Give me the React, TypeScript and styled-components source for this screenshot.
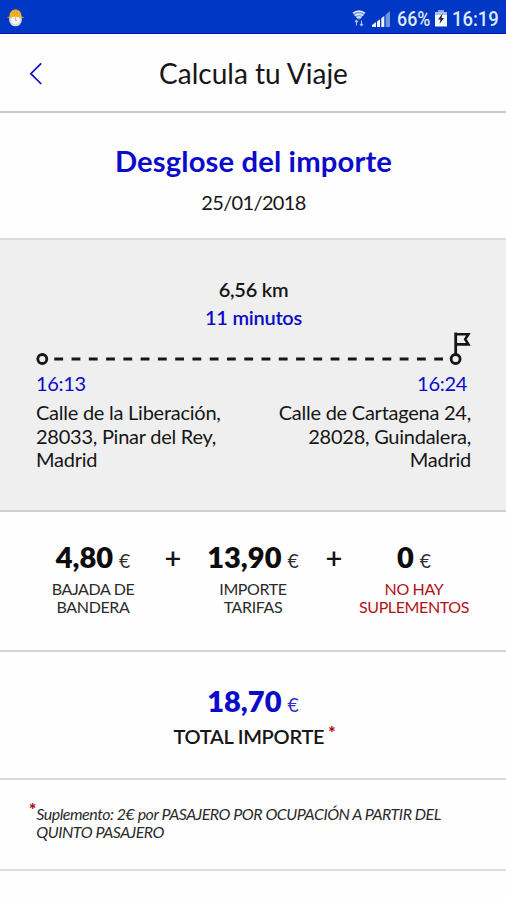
import React from "react";
import styled, { createGlobalStyle } from "styled-components";

const BLUE = "#0b0bc9";
const RED = "#b01218";

const GlobalStyle = createGlobalStyle`
  *, *::before, *::after { box-sizing: border-box; }
  html, body { margin: 0; padding: 0; background: #fefefe; }
  body { font-family: Lato, "Open Sans", sans-serif; color: #161616; }
`;

const Screen = styled.main`
  width: 506px;
  height: 900px;
  overflow: hidden;
  display: flex;
  flex-direction: column;
  background: #fefefe;
`;

const StatusBar = styled.header`
  flex: none;
  height: 34px;
  padding: 3px 7px 0 6px;
  display: flex;
  align-items: center;
  justify-content: space-between;
  background: #0037c4;
  border-bottom: 1px solid #0a10b4;
`;

const StatusGroup = styled.div`
  display: flex;
  align-items: center;
`;

const StatusText = styled.span<{ $width: number; $scale: number }>`
  width: ${(p) => p.$width}px;
  padding-top: 1px;
  font: 500 20.5px/24px Roboto, sans-serif;
  color: #dfe9ff;
  white-space: nowrap;
  transform: scaleX(${(p) => p.$scale});
  transform-origin: left center;
`;

const StatusIcon = styled.svg<{ $gap: number }>`
  display: block;
  flex: none;
  margin-right: ${(p) => p.$gap}px;
`;

const NavBar = styled.nav`
  flex: none;
  height: 79px;
  display: grid;
  grid-template-columns: 72px 1fr 72px;
  align-items: center;
  border-bottom: 2px solid #c9c9c9;
`;

const BackButton = styled.button`
  display: flex;
  justify-content: center;
  padding: 0;
  border: 0;
  background: none;
`;

const NavTitle = styled.h1`
  margin: 1px 0 0 1px;
  font-size: 28px;
  font-weight: 400;
  line-height: 34px;
  text-align: center;
`;

const Section = styled.section<{ $height: number; $top: number; $line?: string; $shade?: boolean }>`
  flex: none;
  height: ${(p) => p.$height}px;
  padding-top: ${(p) => p.$top}px;
  display: flex;
  flex-direction: column;
  align-items: center;
  border-bottom: 2px solid ${(p) => p.$line ?? "#d2d2d2"};
  background: ${(p) => (p.$shade ? "#efefef" : "#fefefe")};
`;

const Heading = styled.h2`
  margin: 0 0 0 1px;
  font-size: 29.2px;
  font-weight: 700;
  line-height: 36px;
  letter-spacing: 0.15px;
  color: ${BLUE};
`;

const DateLabel = styled.p`
  margin: 10px 0 0 1px;
  font-size: 20px;
  line-height: 26px;
  letter-spacing: -0.65px;
`;

const Metric = styled.p<{ $blue?: boolean }>`
  margin: 0 0 0 1px;
  font-size: 20px;
  font-weight: 600;
  line-height: 28px;
  letter-spacing: -0.25px;
  color: ${(p) => (p.$blue ? BLUE : "#161616")};
`;

const RouteLine = styled.svg`
  display: block;
  width: 436px;
  height: 36px;
  margin-top: 1px;
  overflow: visible;
`;

const Stops = styled.div`
  width: 100%;
  padding: 2px 35px 0 36px;
  display: flex;
  justify-content: space-between;
`;

const Stop = styled.div<{ $end?: boolean }>`
  text-align: ${(p) => (p.$end ? "right" : "left")};
`;

const StopTime = styled.p<{ $inset?: number }>`
  margin: 0 ${(p) => p.$inset ?? 0}px 5px 0;
  font-size: 20px;
  line-height: 26px;
  letter-spacing: -0.3px;
  color: ${BLUE};
`;

const Address = styled.address`
  font-size: 20px;
  font-style: normal;
  line-height: 23.5px;
  letter-spacing: -0.25px;
  white-space: nowrap;
`;

const Breakdown = styled.div`
  width: 100%;
  padding: 0 28px;
  display: grid;
  grid-template-columns: 130px 30px 130px 32px 128px;
`;

const Charge = styled.div`
  display: flex;
  flex-direction: column;
  align-items: center;
`;

const Amount = styled.p<{ $blue?: boolean }>`
  margin: 0;
  font-size: 29px;
  font-weight: 800;
  line-height: 36px;
  white-space: nowrap;
  color: ${(p) => (p.$blue ? BLUE : "#0c0c0c")};
`;

const Currency = styled.span`
  margin-left: 6px;
  font-size: 19.5px;
  font-weight: 400;
  line-height: 1;
  opacity: 0.85;
`;

const Plus = styled.span`
  font-size: 29px;
  font-weight: 600;
  line-height: 36px;
  text-align: center;
`;

const ChargeLabel = styled.p<{ $red?: boolean }>`
  margin: 5px 0 0;
  font-size: 16px;
  line-height: 18px;
  letter-spacing: -0.38px;
  text-align: center;
  white-space: nowrap;
  color: ${(p) => (p.$red ? RED : "#2b2b2b")};
`;

const TotalLabel = styled.p`
  margin: 4px 0 0 3px;
  font-size: 20px;
  font-weight: 600;
  line-height: 26px;
  letter-spacing: -0.27px;
`;

const Asterisk = styled.span<{ $gap?: number; $raised?: boolean }>`
  margin-left: ${(p) => p.$gap ?? 0}px;
  font-size: 17px;
  font-weight: 800;
  font-style: normal;
  line-height: 10px;
  letter-spacing: 0;
  vertical-align: ${(p) => (p.$raised ? "5px" : "baseline")};
  color: ${RED};
`;

const Footnote = styled.p`
  width: 100%;
  margin: 0;
  padding-left: 29px;
  display: flex;
  font-size: 16px;
  font-style: italic;
  line-height: 18px;
  letter-spacing: -0.48px;
  color: #2b2b2b;
`;

const Trip = () => (
  <RouteLine viewBox="0 0 436 36" fill="none" stroke="#161616" aria-hidden="true">
    <circle cx="7.3" cy="27" r="4.5" strokeWidth="2.8" />
    <path d="M19.3 27H408" strokeWidth="3" strokeDasharray="8.8 8.47" />
    <circle cx="420.6" cy="27" r="4.5" strokeWidth="2.8" />
    <path d="M420.7 22V0.5" strokeWidth="2.8" />
    <path d="M420.7 2.2H433.4L430.2 7.3L433.4 12.4H420.7" strokeWidth="2.6" />
  </RouteLine>
);

export default function App() {
  return (
    <>
      <GlobalStyle />
      <Screen>
        <StatusBar>
          <StatusIcon $gap={0} width="19" height="20" viewBox="0 0 19 20">
            <circle cx="9.5" cy="12" r="6.3" fill="#dcdcdc" />
            <circle cx="9.5" cy="12" r="4.3" fill="#f4f4f4" />
            <path d="M9.5 9.5v3h1.5" fill="none" stroke="#b5b5b5" />
            <path d="M3.4 8.5C3.6 4 6.3 1.5 9.5 1.5S15.4 4 15.6 8.5L17.5 9.2V10L9.5 8.8 1.5 10V9.2Z" fill="#f0b32c" />
            <path d="M8 2v5M11 2v5" stroke="#d99416" strokeWidth="0.8" />
          </StatusIcon>
          <StatusGroup>
            <StatusIcon $gap={6} width="14" height="18" viewBox="0 0 14 18" fill="none" stroke="#e3ebff">
              <path d="M1 4.5C4.3 1.1 9.7 1.1 13 4.5L7 11Z" fill="#7f9fe5" stroke="none" />
              <path d="M1 4.3C4.3 1.2 9.7 1.2 13 4.3M2.8 6.7C5.1 4.6 8.9 4.6 11.2 6.7M4.8 9C6 7.8 8 7.8 9.2 9" strokeWidth="1.5" />
              <path d="M4.5 16.5V11.5M3 13l1.5-1.6L6 13M9.5 11.5v5M8 15l1.5 1.6L11 15" strokeWidth="1.1" stroke="#a8bff1" />
            </StatusIcon>
            <StatusIcon $gap={7} width="18" height="17" viewBox="0 0 18 17">
              <path d="M0 17V15l4-3v5Z" fill="#f1f5ff" />
              <path d="M5 17V11.5l3-2.2V17ZM9.3 17V8.2l3-2.2V17Z" fill="#f1f5ff" />
              <path d="M13.6 17V4.8L18 1v16Z" fill="#7293df" />
            </StatusIcon>
            <StatusText $width={38} $scale={0.87}>66%</StatusText>
            <StatusIcon $gap={5} width="12" height="18" viewBox="0 0 12 18">
              <path d="M3 1h6v2H3Z" fill="#8ba8e9" />
              <path d="M0 3h12v4H0Z" fill="#a9bff0" />
              <path d="M0 6h12v11.5H0Z" fill="#f4f7ff" />
              <path d="M7.5 4.5 3 10.5H5.5L4.5 14.8 9 9H6.5Z" fill="#1d2430" />
            </StatusIcon>
            <StatusText $width={47} $scale={0.9}>16:19</StatusText>
          </StatusGroup>
        </StatusBar>

        <NavBar>
          <BackButton aria-label="Volver">
            <svg width="14" height="24" viewBox="0 0 14 24" fill="none" stroke={BLUE} strokeWidth="1.7">
              <path d="M12.2 2.4 1.9 12.7 12.2 23" />
            </svg>
          </BackButton>
          <NavTitle>Calcula tu Viaje</NavTitle>
        </NavBar>

        <Section $height={127} $top={30} $line="#dcdcdc">
          <Heading>Desglose del importe</Heading>
          <DateLabel>25/01/2018</DateLabel>
        </Section>

        <Section $height={272} $top={35} $line="#d0d0d0" $shade>
          <Metric>6,56 km</Metric>
          <Metric $blue>11 minutos</Metric>
          <Trip />
          <Stops>
            <Stop>
              <StopTime>16:13</StopTime>
              <Address>
                Calle de la Liberación,<br />28033, Pinar del Rey,<br />Madrid
              </Address>
            </Stop>
            <Stop $end>
              <StopTime $inset={4}>16:24</StopTime>
              <Address>
                Calle de Cartagena 24,<br />28028, Guindalera,<br />Madrid
              </Address>
            </Stop>
          </Stops>
        </Section>

        <Section $height={140} $top={27}>
          <Breakdown>
            <Charge>
              <Amount>4,80<Currency>€</Currency></Amount>
              <ChargeLabel>BAJADA DE<br />BANDERA</ChargeLabel>
            </Charge>
            <Plus>+</Plus>
            <Charge>
              <Amount>13,90<Currency>€</Currency></Amount>
              <ChargeLabel>IMPORTE<br />TARIFAS</ChargeLabel>
            </Charge>
            <Plus>+</Plus>
            <Charge>
              <Amount>0<Currency>€</Currency></Amount>
              <ChargeLabel $red>NO HAY<br />SUPLEMENTOS</ChargeLabel>
            </Charge>
          </Breakdown>
        </Section>

        <Section $height={128} $top={31} $line="#dadada">
          <Amount $blue>18,70<Currency>€</Currency></Amount>
          <TotalLabel>TOTAL IMPORTE<Asterisk $gap={4} $raised>*</Asterisk></TotalLabel>
        </Section>

        <Section $height={91} $top={25} $line="#dcdcdc">
          <Footnote>
            <Asterisk>*</Asterisk>
            <span>
              Suplemento: 2€ por PASAJERO POR OCUPACIÓN A PARTIR DEL<br />QUINTO PASAJERO
            </span>
          </Footnote>
        </Section>
      </Screen>
    </>
  );
}
